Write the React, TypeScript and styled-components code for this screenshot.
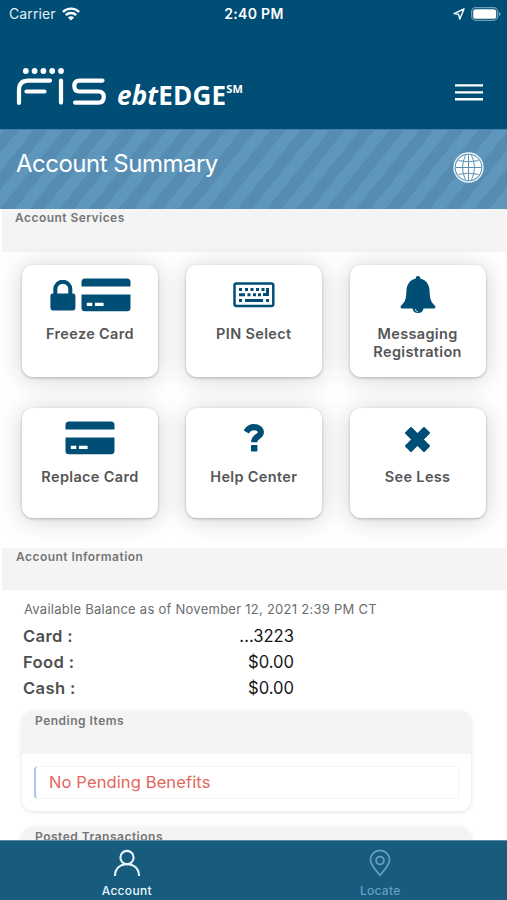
import React from "react";
import styled, { createGlobalStyle } from "styled-components";

const navy = "#004e75";

const GlobalStyle = createGlobalStyle`
  *, *::before, *::after { box-sizing: border-box; }
  body { margin: 0; background: #fff; font-family: Inter, "Liberation Sans", sans-serif; }
  svg { display: block; }
`;

const Screen = styled.div`
  width: 507px;
  height: 900px;
  display: flex;
  flex-direction: column;
  overflow: hidden;
  background: #fff;
`;

const Header = styled.header`
  flex: none;
  height: 129px;
  background: ${navy};
  color: #fff;
`;

const StatusBar = styled.div`
  height: 27px;
  display: grid;
  grid-template-columns: 1fr auto 1fr;
  align-items: center;
  padding: 0 6px 0 9px;
`;

const StatusSide = styled.div<{ $end?: boolean }>`
  display: flex;
  align-items: center;
  gap: 6px;
  justify-content: ${(p) => (p.$end ? "flex-end" : "flex-start")};
`;

const Carrier = styled.span`
  font-size: 14px;
  letter-spacing: 0.12px;
  color: #e3eef5;
`;

const Clock = styled.span`
  font-size: 14px;
  font-weight: 600;
  letter-spacing: 0.3px;
  margin-left: -2px;
`;

const BrandBar = styled.div`
  height: 102px;
  display: flex;
  justify-content: space-between;
  padding: 39px 24px 0 15px;
`;

const Brand = styled.div`
  display: flex;
  gap: 10px;
`;

const Wordmark = styled.div`
  display: flex;
  align-items: flex-start;
  padding-top: 12px;
  font-family: "Open Sans", "Noto Sans", sans-serif;
  font-size: 26px;
  line-height: 34px;
  font-weight: 700;
  letter-spacing: 0.2px;
`;

const Mark = styled.sup`
  font-size: 11px;
  line-height: 14px;
  font-weight: 700;
  margin-top: 4px;
  vertical-align: baseline;
`;

const MenuButton = styled.button`
  width: 28px;
  height: 17px;
  margin-top: 18px;
  padding: 0;
  border: 0;
  background: none;
`;

const Banner = styled.div`
  flex: none;
  height: 80px;
  display: flex;
  justify-content: space-between;
  padding: 20px 23px 0 16px;
  border-top: 1px solid #4383a9;
  background: repeating-linear-gradient(
    128.7deg,
    #5f97bc 0 2.6px,
    #568cb2 3.4px 14.2px,
    #5f97bc 15px 23.15px
  );
`;

const Title = styled.h1`
  margin: 0;
  color: #fff;
  font-size: 24px;
  line-height: 28px;
  font-weight: 400;
  letter-spacing: -0.5px;
`;

const GlobeWrap = styled.div`
  padding-top: 2px;
`;

const Content = styled.main`
  flex: 1;
  min-height: 0;
  overflow: hidden;
`;

const SectionBar = styled.h2<{ $indent: number; $height: number }>`
  margin: 0 1px 0 2px;
  height: ${(p) => p.$height}px;
  padding: 1px 0 0 ${(p) => p.$indent}px;
  background: #f4f4f4;
  color: #757677;
  font-size: 12px;
  line-height: 16px;
  font-weight: 600;
  letter-spacing: 0.45px;
`;

const ServiceGrid = styled.div`
  display: grid;
  grid-template-columns: repeat(3, 136px);
  grid-template-rows: 112px 110px;
  column-gap: 27.8px;
  row-gap: 31px;
  padding: 13px 0 30px 22px;
`;

const ServiceCard = styled.button`
  display: flex;
  flex-direction: column;
  align-items: center;
  padding: 9px 0 0;
  gap: 9px;
  border: 0;
  border-radius: 11px;
  background: #fff;
  box-shadow: 0 1px 3px rgba(0, 0, 0, 0.24), 0 2px 26px rgba(0, 0, 0, 0.18);
  color: #555657;
  font-family: inherit;
  font-size: 14.5px;
  line-height: 18px;
  font-weight: 600;
  letter-spacing: 0.34px;
`;

const IconSlot = styled.span`
  display: flex;
  align-items: center;
  justify-content: center;
  gap: 5px;
  height: 42px;
`;

const BalanceDate = styled.p`
  margin: 0;
  padding: 10px 0 0 24px;
  color: #6b6c6d;
  font-size: 13px;
  line-height: 18px;
  letter-spacing: 0.26px;
`;

const BalanceList = styled.dl`
  margin: 0;
  padding: 6px 0 10px 23px;
`;

const BalanceRow = styled.div`
  display: grid;
  grid-template-columns: 90px 181px;
  height: 25.8px;
  line-height: 25px;
  font-size: 16.6px;
`;

const BalanceLabel = styled.dt`
  color: #4e4f50;
  font-weight: 600;
  letter-spacing: 0.35px;
`;

const BalanceValue = styled.dd`
  margin: 0;
  color: #161616;
  text-align: right;
`;

const Panel = styled.section`
  margin: 0 36px 16px 22px;
  height: 100px;
  overflow: hidden;
  border-radius: 12px;
  background: #fff;
  box-shadow: 0 1px 5px rgba(0, 0, 0, 0.12);
`;

const PanelTitle = styled.h3`
  margin: 0;
  height: 43px;
  padding: 1.500px 0 0 13px;
  background: #f4f4f4;
  color: #757677;
  font-size: 12px;
  line-height: 16px;
  font-weight: 600;
  letter-spacing: 0.5px;
`;

const Notice = styled.div`
  height: 33px;
  margin: 12px 12px 0;
  padding-left: 13px;
  border: 1px solid #f4f4f4;
  border-left: 2px solid #a8c5f8;
  border-radius: 4px;
  color: #e3665d;
  font-size: 16.5px;
  line-height: 31px;
  letter-spacing: 0.12px;
`;

const TabBar = styled.nav`
  flex: none;
  height: 60px;
  display: grid;
  grid-template-columns: 1fr 1fr;
  border-top: 1px solid #5c8ba5;
  background: #175b7d;
`;

const Tab = styled.button<{ $active?: boolean }>`
  display: flex;
  flex-direction: column;
  align-items: center;
  padding: 8px 0 0;
  gap: 6px;
  border: 0;
  background: none;
  color: ${(p) => (p.$active ? "#e8f7ff" : "#669fc4")};
  font-family: inherit;
  font-size: 12px;
  line-height: 16px;
  font-weight: 500;
  letter-spacing: 0.3px;
`;

const WifiIcon = () => (
  <svg width="18" height="14" viewBox="0 0 18 14" fill="none" stroke="#fff" strokeWidth="2.4">
    <path d="M.9 5a11.5 11.5 0 0 1 16.2 0M3.8 8.2a7.4 7.4 0 0 1 10.4 0" />
    <path d="M9 13.6 5.9 10.5a4.4 4.4 0 0 1 6.2 0z" fill="#fff" stroke="none" />
  </svg>
);

const LocationIcon = () => (
  <svg width="12" height="12" viewBox="0 0 12 12" fill="none" stroke="#fff" strokeWidth="1.4" strokeLinejoin="round">
    <path d="M11 1 1 5.6 5.6 6.3 6.8 11z" />
  </svg>
);

const BatteryIcon = () => (
  <svg width="30" height="14" viewBox="0 0 30 14">
    <rect x=".7" y=".7" width="26" height="12.6" rx="4" fill="none" stroke="#fff" strokeOpacity=".45" strokeWidth="1.3" />
    <rect x="2.2" y="2.2" width="23" height="9.6" rx="2.6" fill="#fff" />
    <path d="M28 5v4q1.6-.5 1.6-2T28 5z" fill="#fff" opacity=".5" />
  </svg>
);

const FisLogo = () => (
  <svg width="92" height="40" viewBox="15 66 92 40" fill="none" stroke="#fff" strokeWidth="4.2" strokeLinecap="round">
    <path d="M19 103V90Q19 80.6 28.5 80.6H50M26.5 91.5H44.5M61 80.6V102.6" />
    <path d="M102.5 80.6H79.5Q74.3 80.6 74.3 86T79.5 91.5H98.5Q103.8 91.5 103.8 97T98.5 102.6H75" />
    <g fill="#fff" stroke="none">
      {[25.8, 34.6, 43.4, 52.2, 61].map((x) => (
        <circle key={x} cx={x} cy="71" r="2.9" />
      ))}
    </g>
  </svg>
);

const MenuIcon = () => (
  <svg width="28" height="17" viewBox="0 0 28 17" stroke="#fff" strokeWidth="2.4">
    <path d="M0 1.4H28M0 8.4H28M0 15.2H28" />
  </svg>
);

const GlobeIcon = () => (
  <svg width="31" height="31" viewBox="0 0 31 31" fill="none">
    <circle cx="15.5" cy="15.5" r="14.5" stroke="#eaf4fb" strokeWidth="1.4" />
    <circle cx="15.5" cy="15.5" r="12.8" fill="#fff" />
    <g stroke="#5b91b6" strokeWidth="1">
      <path d="M15.5 3V28M3 15.5H28M5.5 8.6Q15.5 11 25.5 8.6M5.5 22.4Q15.5 20 25.5 22.4" />
      <path d="M12.5 3.4Q6.5 15.5 12.5 27.6M18.5 3.4Q24.5 15.5 18.5 27.6" />
    </g>
  </svg>
);

const LockIcon = () => (
  <svg width="26" height="31" viewBox="0 0 26 31">
    <path d="M5.3 15V9.2a7.5 7.5 0 0 1 15 0V15" fill="none" stroke={navy} strokeWidth="4" />
    <rect x=".4" y="13.5" width="25" height="17" rx="2.4" fill={navy} />
  </svg>
);

const CardIcon = () => (
  <svg width="50" height="34" viewBox="0 0 50 34" fill={navy}>
    <path d="M.5 8.6V4Q.5.5 4 .5H46Q49.5.5 49.5 4V8.6z" />
    <path fillRule="evenodd" d="M.5 16.5H49.5V30Q49.5 33.2 46 33.2H4Q.5 33.2.5 30zM5.8 24.8V28H11.3V24.8zM14 24.8V28H22.6V24.8z" />
  </svg>
);

const KeyboardIcon = () => (
  <svg width="42" height="26" viewBox="0 0 42 26" fill={navy}>
    <rect x="1.5" y="1.5" width="38.8" height="22.6" rx="2" fill="none" stroke={navy} strokeWidth="2.5" />
    <path d="M6 6h3v3H6zM12 6h3v3h-3zM17.5 6h3v3h-3zM23 6h3v3h-3zM28.5 6h3v3h-3zM33 6h3v8h-6v-3h3zM6 11.3h6v3H6zM14.5 11.3h3v3h-3zM20 11.3h3v3h-3zM25 11.3h3v3h-3zM6 17h3v3H6zM12 17h18v3H12zM33 17h3v3h-3z" />
  </svg>
);

const BellIcon = () => (
  <svg width="36" height="38" viewBox="0 0 36 38" fill={navy}>
    <path d="M18 0a2.2 2.2 0 0 1 2.2 2.5C26 3.8 29.3 8.2 29.6 15c.3 8.5 1.5 11.4 5.2 14.5 1.1 1.1.7 3-.9 3H23.5a5.6 5.6 0 0 1-11 0H2.1c-1.6 0-2-1.9-.9-3C4.9 26.4 6.1 23.5 6.4 15 6.7 8.2 10 3.8 15.8 2.5A2.2 2.2 0 0 1 18 0z" />
    <path d="M15 33a3.3 3.3 0 0 0 2.8 2.6" fill="none" stroke="#fff" strokeWidth=".8" />
  </svg>
);

const QuestionIcon = () => (
  <svg width="20" height="28" viewBox="0 0 20 28">
    <path d="M2.2 8Q5 3.2 10 3.2C14.2 3.2 16.8 5.3 16.8 8.4 16.8 12.8 10.2 12.4 10.2 18.2" fill="none" stroke={navy} strokeWidth="6.2" />
    <rect x="7" y="21" width="6.4" height="6.4" rx=".6" fill={navy} />
  </svg>
);

const CloseIcon = () => (
  <svg width="27" height="27" viewBox="0 0 27 27" fill="none" stroke={navy} strokeWidth="2" strokeLinejoin="round">
    <path fill={navy} d="M7 3 13.5 9.5 20 3 25 8 18.5 14.5 25 21 20 26 13.5 19.5 7 26 2 21 8.5 14.5 2 8z" />
  </svg>
);

const AccountIcon = () => (
  <svg width="28" height="28" viewBox="0 0 28 28" fill="none" stroke="currentColor" strokeWidth="2.1">
    <circle cx="14" cy="8.5" r="6.6" />
    <path d="M2 27C2 19.5 7 15.2 14 15.2S26 19.5 26 27" />
  </svg>
);

const PinIcon = () => (
  <svg width="22" height="28" viewBox="0 0 22 28" fill="none" stroke="currentColor" strokeWidth="1.8">
    <path d="M11 26.3C8 22.5 1.5 16.5 1.5 10.8a9.5 9.5 0 0 1 19 0C20.5 16.5 14 22.5 11 26.3z" strokeLinejoin="round" />
    <circle cx="11" cy="11.5" r="3.9" />
  </svg>
);

const services: { icon: React.ReactNode; label: React.ReactNode }[] = [
  { icon: <><LockIcon /><CardIcon /></>, label: "Freeze Card" },
  { icon: <KeyboardIcon />, label: "PIN Select" },
  { icon: <BellIcon />, label: <>Messaging<br />Registration</> },
  { icon: <CardIcon />, label: "Replace Card" },
  { icon: <QuestionIcon />, label: "Help Center" },
  { icon: <CloseIcon />, label: "See Less" },
];

const balances = [
  ["Card :", "...3223"],
  ["Food :", "$0.00"],
  ["Cash :", "$0.00"],
];

export default function App() {
  return (
    <>
      <GlobalStyle />
      <Screen>
        <Header>
          <StatusBar>
            <StatusSide><Carrier>Carrier</Carrier><WifiIcon /></StatusSide>
            <Clock>2:40 PM</Clock>
            <StatusSide $end><LocationIcon /><BatteryIcon /></StatusSide>
          </StatusBar>
          <BrandBar>
            <Brand>
              <FisLogo />
              <Wordmark><em>ebt</em><span>EDGE</span><Mark>SM</Mark></Wordmark>
            </Brand>
            <MenuButton aria-label="Menu"><MenuIcon /></MenuButton>
          </BrandBar>
        </Header>
        <Banner>
          <Title>Account Summary</Title>
          <GlobeWrap><GlobeIcon /></GlobeWrap>
        </Banner>
        <Content>
          <SectionBar $indent={13} $height={43}>Account Services</SectionBar>
          <ServiceGrid>
            {services.map((s, i) => (
              <ServiceCard key={i}>
                <IconSlot>{s.icon}</IconSlot>
                <span>{s.label}</span>
              </ServiceCard>
            ))}
          </ServiceGrid>
          <SectionBar $indent={14} $height={42}>Account Information</SectionBar>
          <BalanceDate>Available Balance as of November 12, 2021 2:39 PM CT</BalanceDate>
          <BalanceList>
            {balances.map(([label, value]) => (
              <BalanceRow key={label}>
                <BalanceLabel>{label}</BalanceLabel>
                <BalanceValue>{value}</BalanceValue>
              </BalanceRow>
            ))}
          </BalanceList>
          <Panel>
            <PanelTitle>Pending Items</PanelTitle>
            <Notice>No Pending Benefits</Notice>
          </Panel>
          <Panel>
            <PanelTitle>Posted Transactions</PanelTitle>
          </Panel>
        </Content>
        <TabBar>
          <Tab $active><AccountIcon />Account</Tab>
          <Tab><PinIcon />Locate</Tab>
        </TabBar>
      </Screen>
    </>
  );
}
